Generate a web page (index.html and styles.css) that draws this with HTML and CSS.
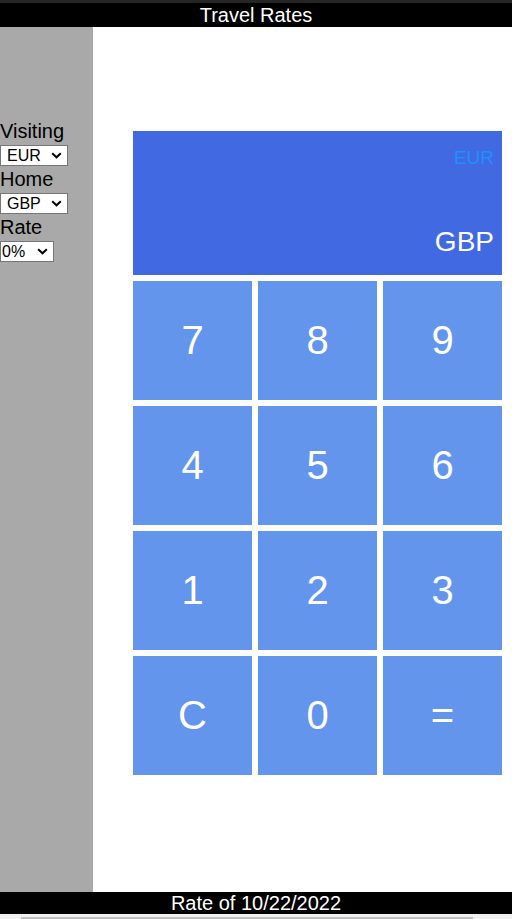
FILE: index.html
```html
<!DOCTYPE html>
<html>
<head>
<meta charset="utf-8">
<title>Travel Rates</title>
<link rel="stylesheet" href="styles.css">
</head>
<body>
<div class="topstrip"></div>
<header class="header">Travel Rates</header>
<div class="middle">
  <aside class="sidebar">
    <div class="label">Visiting</div>
    <div class="field">
      <div class="sel-wrap sel-wide">
        <select class="sel sel-pad"><option>EUR</option></select>
        <svg class="chev" width="11" height="7" viewBox="0 0 11 7"><path d="M1.2 1.2 L5.5 5.3 L9.8 1.2" fill="none" stroke="#000" stroke-width="2"/></svg>
      </div>
    </div>
    <div class="label">Home</div>
    <div class="field">
      <div class="sel-wrap sel-wide">
        <select class="sel sel-pad"><option>GBP</option></select>
        <svg class="chev" width="11" height="7" viewBox="0 0 11 7"><path d="M1.2 1.2 L5.5 5.3 L9.8 1.2" fill="none" stroke="#000" stroke-width="2"/></svg>
      </div>
    </div>
    <div class="label">Rate</div>
    <div class="field">
      <div class="sel-wrap sel-narrow">
        <select class="sel sel-tight"><option>0%</option></select>
        <svg class="chev" width="11" height="7" viewBox="0 0 11 7"><path d="M1.2 1.2 L5.5 5.3 L9.8 1.2" fill="none" stroke="#000" stroke-width="2"/></svg>
      </div>
    </div>
  </aside>
  <main class="main">
    <div class="display">
      <div class="display-from">EUR</div>
      <div class="display-to">GBP</div>
    </div>
    <div class="keypad">
      <button class="key">7</button>
      <button class="key">8</button>
      <button class="key">9</button>
      <button class="key">4</button>
      <button class="key">5</button>
      <button class="key">6</button>
      <button class="key">1</button>
      <button class="key">2</button>
      <button class="key">3</button>
      <button class="key">C</button>
      <button class="key">0</button>
      <button class="key">=</button>
    </div>
  </main>
</div>
<footer class="footer">Rate of 10/22/2022</footer>
<div class="hscroll"><div class="hscroll-thumb"></div></div>
</body>
</html>
```
FILE: styles.css
```css
html, body {
  margin: 0;
  padding: 0;
  height: 919px;
  overflow: hidden;
  background: #ffffff;
  font-family: "Liberation Sans", Arial, sans-serif;
}

.topstrip {
  height: 3px;
  background: #262626;
}

.header {
  height: 24px;
  line-height: 24px;
  background: #000000;
  color: #ffffff;
  text-align: center;
  font-size: 20px;
}

.middle {
  display: flex;
  height: 865px;
}

.sidebar {
  width: 93px;
  flex: none;
  background: #a9a9a9;
  padding-top: 93px;
  box-sizing: border-box;
}

.label {
  font-size: 20px;
  line-height: 23px;
  height: 23px;
  color: #000000;
}

.field {
  height: 25px;
  padding-top: 2px;
  box-sizing: border-box;
}

.sel-wrap {
  position: relative;
  height: 21px;
}

.sel-wide {
  width: 68px;
}

.sel-narrow {
  width: 54px;
}

.sel {
  -webkit-appearance: none;
  appearance: none;
  display: block;
  width: 100%;
  height: 21px;
  font-family: "Liberation Sans", Arial, sans-serif;
  font-size: 16px;
  line-height: 19px;
  margin: 0;
  padding: 0;
  border: 1px solid #767676;
  border-radius: 0;
  background: #ffffff;
  color: #000000;
  box-sizing: border-box;
}

.sel-pad {
  padding-left: 6px;
}

.sel-tight {
  padding-left: 1px;
}

.chev {
  position: absolute;
  right: 6px;
  top: 7px;
  pointer-events: none;
}

.main {
  flex: 1;
  padding: 104px 10px 0 40px;
  box-sizing: border-box;
}

.display {
  height: 144px;
  background: #4169e1;
  display: flex;
  flex-direction: column;
  justify-content: space-between;
  align-items: flex-end;
  padding: 16px 8px 17px 8px;
  box-sizing: border-box;
}

.display-from {
  color: #1e90ff;
  font-size: 19px;
  line-height: 22px;
}

.display-to {
  color: #ffffff;
  font-size: 28px;
  line-height: 32px;
}

.keypad {
  margin-top: 6px;
  display: grid;
  grid-template-columns: repeat(3, 119px);
  grid-auto-rows: 119px;
  gap: 6px;
}

.key {
  border: none;
  margin: 0;
  padding: 0;
  background: #6495ed;
  color: #ffffff;
  font-family: "Liberation Sans", Arial, sans-serif;
  font-size: 40px;
}

.footer {
  height: 22px;
  line-height: 22px;
  background: #000000;
  color: #ffffff;
  text-align: center;
  font-size: 20px;
}

.hscroll {
  height: 5px;
  background: #f1f1f1;
  padding-top: 3px;
  box-sizing: border-box;
}

.hscroll-thumb {
  margin-left: 21px;
  width: 452px;
  height: 2px;
  background: #c1c1c1;
}
```
